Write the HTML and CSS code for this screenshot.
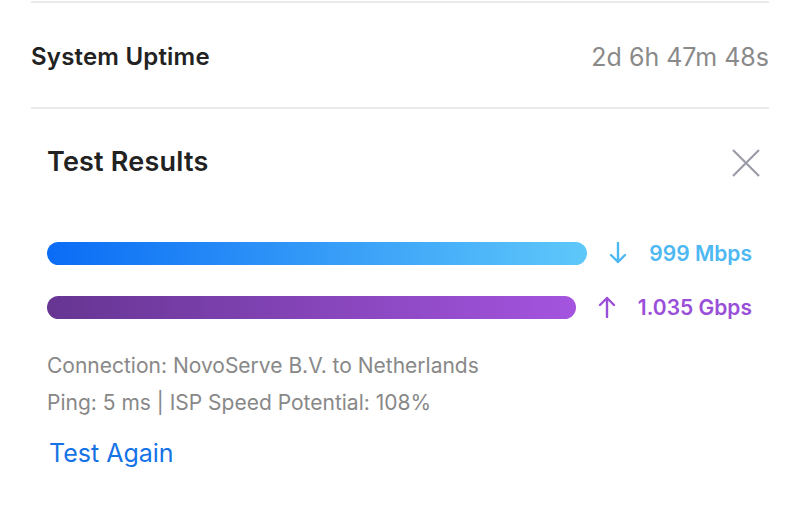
FILE: index.html
```html
<!DOCTYPE html>
<html lang="en">
<head>
    <meta charset="UTF-8">
    <meta name="viewport" content="width=device-width, initial-scale=1.0">
    <title>Speed Test</title>
    <link rel="stylesheet" href="styles.css">
</head>
<body>
    <div class="panel">
        <div class="divider"></div>
        <div class="info-row">
            <span class="info-label">System Uptime</span>
            <span class="info-value">2d 6h 47m 48s</span>
        </div>
        <div class="divider"></div>

        <div class="results">
            <div class="results-head">
                <h2 class="results-title">Test Results</h2>
                <button class="close-btn" aria-label="Close">
                    <svg width="30" height="30" viewBox="0 0 30 30">
                        <path d="M2 2 L28 28 M28 2 L2 28" stroke="#9c9ca8" stroke-width="2.2" fill="none"/>
                    </svg>
                </button>
            </div>

            <div class="speeds">
                <div class="speed-row">
                    <div class="bar bar-down"></div>
                    <div class="speed speed-down">
                        <svg class="arrow" width="18" height="22" viewBox="0 0 18 22">
                            <path d="M9 1 V20 M2 13 L9 20 L16 13" stroke="currentColor" stroke-width="2.4" fill="none" stroke-linecap="round" stroke-linejoin="round"/>
                        </svg>
                        <span>999 Mbps</span>
                    </div>
                </div>
                <div class="speed-row">
                    <div class="bar bar-up"></div>
                    <div class="speed speed-up">
                        <svg class="arrow" width="18" height="22" viewBox="0 0 18 22">
                            <path d="M9 21 V2 M2 9 L9 2 L16 9" stroke="currentColor" stroke-width="2.4" fill="none" stroke-linecap="round" stroke-linejoin="round"/>
                        </svg>
                        <span>1.035 Gbps</span>
                    </div>
                </div>
            </div>

            <p class="meta">Connection: NovoServe B.V. to Netherlands</p>
            <p class="meta">Ping: 5 ms | ISP Speed Potential: 108%</p>

            <a class="again" href="#">Test Again</a>
        </div>
    </div>
</body>
</html>
```

FILE: styles.css
```css
body {
  margin: 0;
  background: #fff;
  font-family: Inter, "Noto Sans", sans-serif;
}

.panel {
  padding: 1px 31px 0 31px;
}

.divider {
  height: 2px;
  background: #ebebeb;
}

.info-row {
  display: flex;
  justify-content: space-between;
  align-items: center;
  box-sizing: border-box;
  height: 104px;
  padding-top: 3px;
}

.info-label {
  font-size: 24px;
  font-weight: 600;
  letter-spacing: 0.2px;
  color: #222;
}

.info-value {
  font-size: 25px;
  color: #8a8a8a;
}

.results {
  padding: 0 17px 0 16px;
}

.results-head {
  display: flex;
  justify-content: space-between;
  align-items: center;
  box-sizing: border-box;
  height: 108px;
  padding-bottom: 3px;
}

.results-title {
  margin: 0;
  font-size: 27px;
  font-weight: 600;
  letter-spacing: 0.2px;
  color: #222;
}

.close-btn {
  background: none;
  border: none;
  padding: 0;
  margin-right: -9px;
  margin-top: 3px;
  display: flex;
  cursor: pointer;
}

.speeds {
  padding-top: 9px;
}

.speed-row {
  display: flex;
  align-items: center;
  height: 54px;
}

.bar {
  flex: 1;
  height: 23px;
  border-radius: 12px;
}

.bar-down {
  background: linear-gradient(90deg, #0a6cf5, #5ec8fa);
}

.bar-up {
  background: linear-gradient(90deg, #663592, #a454df);
}

.speed {
  display: flex;
  align-items: center;
  margin-left: 22px;
  font-size: 21px;
  font-weight: 600;
}

.speed .arrow {
  margin-right: 22px;
}

.speed-down {
  color: #4db8f2;
}

.speed-up {
  color: #9a4fd9;
}

.meta {
  margin: 0;
  font-size: 21px;
  line-height: 37px;
  color: #888;
}

.meta:first-of-type {
  margin-top: 13px;
}

.again {
  display: inline-block;
  margin-top: 17px;
  margin-left: 2px;
  font-size: 25px;
  color: #1673e6;
  text-decoration: none;
}
```
